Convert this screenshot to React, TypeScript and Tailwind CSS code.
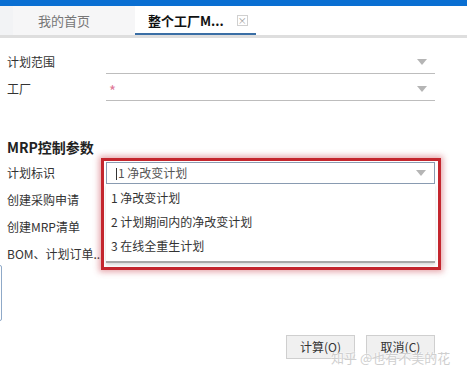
import React from "react";

const Caret = () => (
    <svg width="10" height="6" viewBox="0 0 10 6" className="shrink-0">
        <path d="M0 0 L10 0 L5 6 Z" fill="#b5b5b5" />
    </svg>
);

const options = ["1 净改变计划", "2 计划期间内的净改变计划", "3 在线全重生计划"];

const App = () => {
    return (
        <div
            className="relative w-[467px] h-[378px] overflow-hidden bg-white text-[12px] text-[#333]"
            style={{ fontFamily: '"Noto Sans CJK SC", "Noto Sans", sans-serif' }}
        >
            {/* top bar + tabs */}
            <div className="h-[6px] bg-[#0a6fd2]" />
            <div className="flex h-[29px] bg-[#f2f3f5]">
                <div className="w-[13px]" />
                <div className="flex w-[122px] items-center bg-[#f6f6f7] pl-[25px] text-[13px] text-[#777]">
                    我的首页
                </div>
                <div className="flex w-[121px] items-center gap-[13px] border-b-2 border-[#3a6ea5] bg-white pl-[13px] pt-[2px]">
                    <span className="text-[13px] font-bold text-[#111]">整个工厂M...</span>
                    <span className="flex h-[11px] w-[11px] items-center justify-center border border-[#d0d0d0] text-[9px] leading-none text-[#999]">
                        ×
                    </span>
                </div>
                <div className="flex-1 bg-white" />
            </div>
            <div className="h-[3px] bg-[#dedede]" />

            {/* fields */}
            <div className="mt-[12px] flex h-[24px] items-center">
                <span className="w-[106px] pl-[7px]">计划范围</span>
                <div className="flex h-full w-[329px] items-center justify-end border-b border-[#bdbdbd] pr-[8px]">
                    <Caret />
                </div>
            </div>
            <div className="mt-[3px] flex h-[24px] items-center">
                <span className="w-[106px] pl-[7px]">工厂</span>
                <div className="flex h-full w-[329px] items-center justify-between border-b border-[#bdbdbd] pl-[3px] pr-[8px]">
                    <span className="pt-[4px] text-[15px] leading-none text-[#e07a98]">*</span>
                    <Caret />
                </div>
            </div>

            <div className="mt-[36px] pl-[7px] text-[14px] font-bold text-[#222]">MRP控制参数</div>

            <div className="mt-[1px] flex flex-col pl-[7px]">
                <div className="flex h-[27px] items-center">计划标识</div>
                <div className="flex h-[27px] items-center">创建采购申请</div>
                <div className="flex h-[27px] items-center">创建MRP清单</div>
                <div className="flex h-[27px] items-center">BOM、计划订单...</div>
            </div>

            {/* partially visible panel at left edge */}
            <div className="absolute left-[-6px] top-[265px] h-[56px] w-[8px] rounded-[2px] border border-[#8fa9c8]" />

            {/* dropdown popup with red highlight */}
            <div className="absolute left-[101px] top-[158px] h-[112px] w-[340px] border-[3px] border-[#c4262e] shadow-[0_0_6px_2px_rgba(200,60,70,0.45)]">
                <div className="ml-[2px] mt-[1px] flex h-[22px] w-[329px] items-center justify-between border border-[#8b9db3] bg-white pl-[9px] pr-[8px]">
                    <span className="text-[#555]">
                        <span className="mr-[1px] inline-block h-[12px] w-px translate-y-[2px] bg-[#333]" />1 净改变计划
                    </span>
                    <Caret />
                </div>
                <div className="ml-[2px] flex h-[79px] w-[329px] flex-col border-b-2 border-[#a8a8a8] bg-white pl-[5px] pt-[2px] shadow-[0_2px_3px_rgba(0,0,0,0.15)]">
                    {options.map((o) => (
                        <div key={o} className="flex h-[24px] items-center text-[#333]">
                            {o}
                        </div>
                    ))}
                </div>
            </div>

            {/* buttons */}
            <div className="absolute left-[286px] top-[335px] flex gap-[11px]">
                <button className="h-[24px] w-[69px] border border-[#cfcfcf] bg-[#f0f0f0] text-[12px] text-[#333]">计算(O)</button>
                <button className="h-[24px] w-[69px] border border-[#cfcfcf] bg-[#f0f0f0] text-[12px] text-[#333]">取消(C)</button>
            </div>

            {/* watermark */}
            <div
                className="absolute left-[331px] top-[348px] text-[13px] text-[#cfcfcf]"
                style={{ textShadow: "0 0 2px #fff, 0 0 2px #fff" }}
            >
                知乎 @也有不美的花
            </div>
        </div>
    );
};

export default App;
